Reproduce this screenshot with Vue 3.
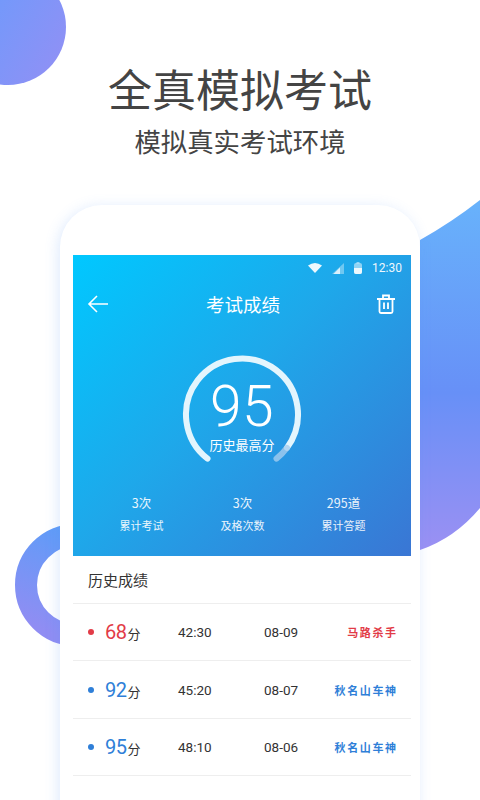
<script setup>
const stats = [
  { value: '3次', label: '累计考试' },
  { value: '3次', label: '及格次数' },
  { value: '295道', label: '累计答题' },
]
const rows = [
  { score: 68, time: '42:30', date: '08-09', name: '马路杀手', tone: 'red' },
  { score: 92, time: '45:20', date: '08-07', name: '秋名山车神', tone: 'blue' },
  { score: 95, time: '48:10', date: '08-06', name: '秋名山车神', tone: 'blue' },
]
</script>

<template>
  <div class="page">
    <svg class="decor" width="480" height="800" viewBox="0 0 480 800" aria-hidden="true">
      <defs>
        <linearGradient id="tl" x1="0" y1="0.2" x2="1" y2="0.8">
          <stop offset="0" stop-color="#669dfd" />
          <stop offset="1" stop-color="#9090f5" />
        </linearGradient>
        <linearGradient id="rt" x1="0.5" y1="0" x2="0.5" y2="1">
          <stop offset="0" stop-color="#68b2fb" />
          <stop offset="0.55" stop-color="#6790f7" />
          <stop offset="1" stop-color="#9b90f3" />
        </linearGradient>
        <linearGradient id="ring" x1="0.7" y1="0" x2="0.3" y2="1">
          <stop offset="0" stop-color="#5c9df8" />
          <stop offset="1" stop-color="#908df3" />
        </linearGradient>
      </defs>
      <circle cx="8" cy="27" r="58" fill="url(#tl)" />
      <path d="M420 240 Q452 222 480 200 V508 Q455 538 420 550 Z" fill="url(#rt)" />
      <circle cx="76" cy="585" r="50" fill="none" stroke="url(#ring)" stroke-width="22" />
    </svg>

    <header class="headline">
      <h1>全真模拟考试</h1>
      <p>模拟真实考试环境</p>
    </header>

    <section class="phone">
      <div class="screen">
        <div class="hero">
          <div class="status">
            <svg width="14" height="10" viewBox="0 0 14 10"><path d="M0 2.500Q7-2.500 14 2.500L7 10Z" fill="#fff" /></svg>
            <svg width="12" height="11" viewBox="0 0 12 11"><path d="M12 0V11H0Z" fill="#fff" opacity=".4" /><path d="M8 4.500V11H1.500Z" fill="#fff" opacity=".85" /></svg>
            <svg width="8" height="12" viewBox="0 0 8 12"><rect y="1" width="8" height="11" rx="2" fill="#fff" opacity=".55" /><path d="M0 6H8V10Q8 12 6 12H2Q0 12 0 10Z" fill="#fff" /><rect x="2.500" width="3" height="1.500" fill="#fff" opacity=".55" /></svg>
            <span>12:30</span>
          </div>
          <div class="nav">
            <svg width="22" height="20" viewBox="0 0 22 20" fill="none" stroke="#fff" stroke-width="1.600"><path d="M21 10H2M10 2 2 10l8 8" /></svg>
            <h2>考试成绩</h2>
            <svg width="18" height="20" viewBox="0 0 18 20" fill="none" stroke="#fff" stroke-width="1.800"><path d="M0 5H18M6 5V1.500H12V5M2.500 5V17.500Q2.500 19 4 19H14Q15.500 19 15.500 17.500V5M7 8.500V15M11 8.500V15" /></svg>
          </div>
          <div class="gauge">
            <svg width="128" height="116" viewBox="0 0 128 116" fill="none" stroke-width="6" stroke-linecap="round">
              <path d="M29.500 106.600A56 56 0 1 1 109 95.800" stroke="#e3f5fd" />
              <path d="M109 95.800A56 56 0 0 1 98.500 106.600" stroke="#a5cdef" opacity=".8" />
            </svg>
            <div class="gauge-text">
              <strong>95</strong>
              <span>历史最高分</span>
            </div>
          </div>
          <div class="stats">
            <div v-for="item in stats" :key="item.label" class="stat">
              <b>{{ item.value }}</b>
              <small>{{ item.label }}</small>
            </div>
          </div>
        </div>
        <div class="history-title">历史成绩</div>
        <div v-for="row in rows" :key="row.date" class="row" :class="row.tone">
          <div class="score"><i></i><em>{{ row.score }}</em><span>分</span></div>
          <div class="time">{{ row.time }}</div>
          <div class="date">{{ row.date }}</div>
          <div class="name">{{ row.name }}</div>
        </div>
      </div>
    </section>
  </div>
</template>

<style scoped>
.page {
  position: relative;
  width: 480px;
  height: 800px;
  overflow: hidden;
  background: #fff;
  font-family: "Noto Sans CJK SC", "Noto Sans", sans-serif;
}
.decor { position: absolute; left: 0; top: 0; }
.headline {
  position: relative;
  padding-top: 58px;
  text-align: center;
  color: #444;
}
.headline h1 { margin: 0; font-size: 44px; line-height: 60px; font-weight: 400; }
.headline p { margin: 4px 0 0; font-size: 26.400px; line-height: 38px; }
.phone {
  position: relative;
  width: 360px;
  height: 640px;
  margin: 45px 0 0 60px;
  padding: 50px 9px 0 13px;
  box-sizing: border-box;
  background: #fff;
  border-radius: 42px 42px 0 0;
  box-shadow: -2px 2px 14px rgba(90, 150, 245, .2);
}
.hero {
  height: 301px;
  background: linear-gradient(135deg, #00c8ff 0%, #1ea8ea 45%, #3a76d4 100%);
  color: #fff;
}
.status {
  display: flex;
  justify-content: flex-end;
  align-items: center;
  gap: 10px;
  height: 26px;
  padding-right: 9px;
  font: 12px "Roboto", sans-serif;
  opacity: .92;
}
.nav {
  display: flex;
  justify-content: space-between;
  align-items: center;
  height: 46px;
  padding: 0 16px 0 14px;
}
.nav h2 { margin: 0; font-size: 18.500px; font-weight: 400; }
.gauge {
  position: relative;
  width: 128px;
  height: 116px;
  margin: 25px auto 0;
}
.gauge-text {
  position: absolute;
  inset: 0;
  display: flex;
  flex-direction: column;
  align-items: center;
}
.gauge-text strong {
  margin-top: 33px;
  font: 300 57px/44px "Roboto", sans-serif;
  letter-spacing: .5px;
}
.gauge-text span { font-size: 13px; line-height: 18px; margin-top: 7px; }
.stats {
  display: grid;
  grid-template-columns: 1fr 1fr 1fr;
  margin-top: 26px;
  padding: 0 17px 0 18px;
  text-align: center;
}
.stat b { display: block; font-weight: 400; font-size: 12.500px; line-height: 18px; opacity: .9; }
.stat small { display: block; font-size: 11px; line-height: 16px; margin-top: 5px; opacity: .9; }
.history-title {
  height: 47px;
  padding-left: 15px;
  line-height: 47px;
  font-size: 15px;
  color: #333;
  border-bottom: 1px solid #eee;
}
.row {
  display: grid;
  grid-template-columns: 90px 86px 62px 1fr;
  align-items: center;
  height: 57.400px;
  box-sizing: border-box;
  padding: 0 15px;
  border-bottom: 1px solid #eee;
  font: 13.500px "Roboto", sans-serif;
  color: #333;
}
.score { display: flex; align-items: baseline; }
.score i {
  width: 6px;
  height: 6px;
  margin-right: 11px;
  border-radius: 50%;
  align-self: center;
  background: currentColor;
}
.score em { font-style: normal; font-weight: 400; font-size: 20px; letter-spacing: -.5px; }
.score span { color: #333; font-size: 13px; font-family: "Noto Sans CJK SC", sans-serif; margin-left: 1px; }
.name {
  text-align: right;
  font: 700 11px "Noto Sans CJK SC", sans-serif;
  letter-spacing: 1.600px;
  white-space: nowrap;
  margin-right: -1.600px;
}
.red .score, .red .name { color: #e23b47; }
.blue .score, .blue .name { color: #2f7fd8; }
</style>
